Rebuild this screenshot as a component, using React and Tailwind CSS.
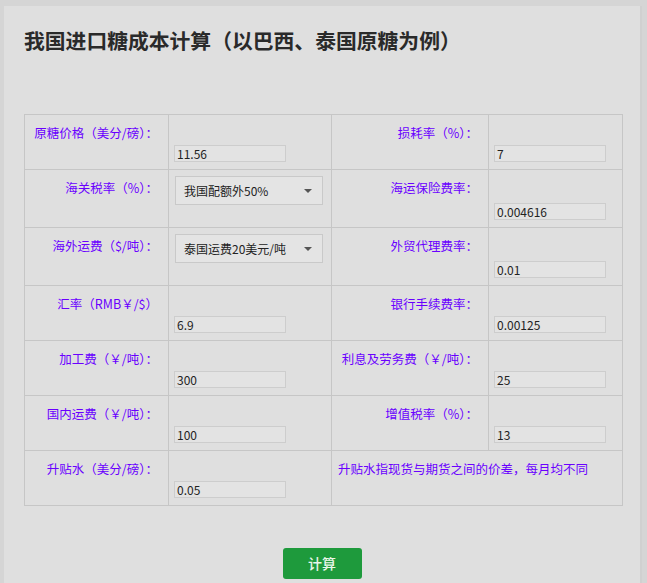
import React from 'react';

const font = { fontFamily: '"Noto Sans CJK SC", "Liberation Sans", sans-serif' };

function Label({ children }) {
  return (
    <td className="border border-[#c6c6c6] align-top pt-[9px] pr-[10px] text-right text-[12.5px] leading-[18px] text-[#6a00ff]">
      {children}
    </td>
  );
}

function InputCell({ value }) {
  return (
    <td className="border border-[#c6c6c6] align-bottom pb-[7px] pl-[5px]">
      <input
        readOnly
        value={value}
        className="block w-[112px] h-[17px] border border-[#cdcdcd] bg-[#e3e3e3] px-[2px] text-[12px] leading-[15px] text-[#222] outline-none"
        style={font}
      />
    </td>
  );
}

function SelectCell({ value }) {
  return (
    <td className="border border-[#c6c6c6] align-top pt-[6px] pl-[6px]">
      <div className="flex items-center justify-between w-[148px] h-[29px] border border-[#c9c9c9] bg-[#e4e4e4] pl-[8px] pr-[10px] text-[12px] text-[#222]">
        <span>{value}</span>
        <span className="w-0 h-0 border-l-[4px] border-r-[4px] border-t-[4px] border-l-transparent border-r-transparent border-t-[#555]" />
      </div>
    </td>
  );
}

export default function App() {
  return (
    <div className="min-h-[583px] bg-[#d5d5d5] pt-[6px] pl-[4px] overflow-hidden" style={font}>
      <div className="w-[638px] min-h-[600px] bg-[#dfdfdf] border-r-2 border-[#d0d0d0] pt-[20px] px-[20px]">
        <h1 className="text-[20.8px] leading-[28px] font-bold text-[#2a2a2a]">
          我国进口糖成本计算（以巴西、泰国原糖为例）
        </h1>

        <table className="mt-[60px] border-collapse table-fixed w-[598px]">
          <colgroup>
            <col className="w-[144px]" />
            <col className="w-[163px]" />
            <col className="w-[157px]" />
            <col className="w-[134px]" />
          </colgroup>
          <tbody>
            <tr className="h-[55px]">
              <Label>原糖价格（美分/磅）：</Label>
              <InputCell value="11.56" />
              <Label>损耗率（%）：</Label>
              <InputCell value="7" />
            </tr>
            <tr className="h-[58px]">
              <Label>海关税率（%）：</Label>
              <SelectCell value="我国配额外50%" />
              <Label>海运保险费率：</Label>
              <InputCell value="0.004616" />
            </tr>
            <tr className="h-[58px]">
              <Label>海外运费（$/吨）：</Label>
              <SelectCell value="泰国运费20美元/吨" />
              <Label>外贸代理费率：</Label>
              <InputCell value="0.01" />
            </tr>
            <tr className="h-[55px]">
              <Label>汇率（RMB￥/$）</Label>
              <InputCell value="6.9" />
              <Label>银行手续费率：</Label>
              <InputCell value="0.00125" />
            </tr>
            <tr className="h-[55px]">
              <Label>加工费（￥/吨）：</Label>
              <InputCell value="300" />
              <Label>利息及劳务费（￥/吨）：</Label>
              <InputCell value="25" />
            </tr>
            <tr className="h-[55px]">
              <Label>国内运费（￥/吨）：</Label>
              <InputCell value="100" />
              <Label>增值税率（%）：</Label>
              <InputCell value="13" />
            </tr>
            <tr className="h-[55px]">
              <Label>升贴水（美分/磅）：</Label>
              <InputCell value="0.05" />
              <td
                colSpan={2}
                className="border border-[#c6c6c6] align-top pt-[9px] pl-[6px] text-[12.5px] leading-[18px] text-[#6a00ff]"
              >
                升贴水指现货与期货之间的价差，每月均不同
              </td>
            </tr>
          </tbody>
        </table>

        <div className="flex justify-center mt-[42px]">
          <button className="w-[79px] h-[31px] rounded-[3px] bg-[#1e9a3c] text-[14px] font-medium text-[#eaf6ea]">
            计算
          </button>
        </div>
      </div>
    </div>
  );
}
